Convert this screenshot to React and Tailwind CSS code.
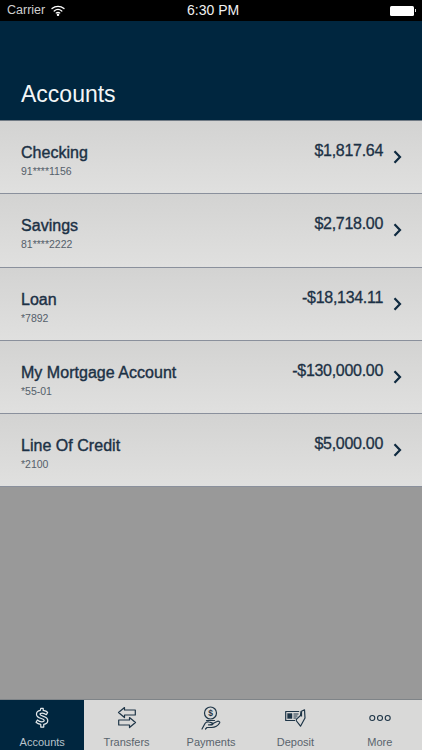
import React from "react";

const rows = [
  ["Checking", "91****1156", "$1,817.64"],
  ["Savings", "81****2222", "$2,718.00"],
  ["Loan", "*7892", "-$18,134.11"],
  ["My Mortgage Account", "*55-01", "-$130,000.00"],
  ["Line Of Credit", "*2100", "$5,000.00"],
];

const Dollar = () => (
  <svg width="14" height="24" viewBox="0 0 16 24" fill="none" stroke="#e3e8eb" strokeWidth="1.400" strokeLinejoin="round">
    <path d="M6.600 1h2.800v2.400c2 .3 4.200 1.200 5 2.200l-1.400 2.600c-1.200-1-3-1.900-4.800-1.900-1.600 0-2.500.6-2.500 1.500 0 1 1.200 1.400 3.300 2 3 .9 5.600 1.900 5.600 5 0 2.500-1.900 4-4.600 4.400v3.200H6.600v-3.100c-2.300-.3-4.200-1.300-5.400-2.500l1.500-2.500c1.400 1.200 3.200 2.100 5.100 2.100 1.700 0 2.700-.6 2.700-1.700 0-1.100-1.300-1.500-3.400-2.100-2.900-.8-5.400-1.800-5.400-4.800 0-2.500 1.800-4 4.400-4.400z" />
  </svg>
);

const Transfers = () => (
  <svg width="20" height="24" viewBox="0 0 20 24" fill="none" stroke="#1e3547" strokeWidth="1.200" strokeLinejoin="round">
    <path d="M7.500 1.500 1.500 6.500l6 5V9h10.800V4H7.500z" />
    <path d="M12.500 11.500l6 5-6 5V19H1.700v-5h10.800z" />
  </svg>
);

const Payments = () => (
  <svg width="20" height="24" viewBox="0 0 20 24" fill="none" stroke="#1e3547" strokeWidth="1.200" strokeLinecap="round" strokeLinejoin="round">
    <circle cx="9.500" cy="7" r="6" />
    <text x="9.500" y="10" textAnchor="middle" fontSize="8.500" fontFamily="Liberation Sans, sans-serif" fontWeight="700" fill="#1e3547" stroke="none">$</text>
    <path d="M1 23l3-5.500c1-1.500 2.500-2 4-1.500l3 .8c1.300.3 1.300 2 -.2 2H7.500" />
    <path d="M10 18.500l6-3c1.500-.8 3.200.3 2.700 1.300-1.500 2.700-4.700 4.700-8.200 4.700H6L4.500 23" />
    <path d="M5.500 14.500h8" />
  </svg>
);

const Deposit = () => (
  <svg width="21" height="18" viewBox="0 0 21 18" fill="none" stroke="#1e3547" strokeWidth="1.200" strokeLinejoin="round">
    <path d="M10 11.500H.7V2.500h13.500" />
    <path d="M2.500 4.500h4.500v5H2.500z" fill="#1e3547" strokeWidth="0.400" />
    <path d="M8.500 5h5M8.500 7h4M8.500 9h3" strokeWidth="1" />
    <path d="M16 2.500 19.500 .8 20 9l-4.500 8.200-4-5.200c-.5-.9 0-1.800.6-2.400L15.500 6.500z" />
    <path d="M16.500 2.500v5" />
  </svg>
);

const Dots = () => (
  <svg width="22" height="8" viewBox="0 0 22 8" fill="none" stroke="#1e3547" strokeWidth="1.100">
    <circle cx="3.300" cy="4" r="2.500" />
    <circle cx="11" cy="4" r="2.500" />
    <circle cx="18.700" cy="4" r="2.500" />
  </svg>
);

const tabs = [
  ["Accounts", <Dollar />],
  ["Transfers", <Transfers />],
  ["Payments", <Payments />],
  ["Deposit", <Deposit />],
  ["More", <Dots />],
];

export default function App() {
  return (
    <div className="w-[422px] h-[750px] flex flex-col overflow-hidden bg-[#999999] font-['Liberation_Sans',Arial,sans-serif]">
      <div className="h-[21px] bg-black text-white flex items-center justify-between relative pl-[7px] pr-[6px] shrink-0">
        <div className="flex items-center gap-[6px]">
          <span className="text-[12.500px] text-[#cfcfcf]">Carrier</span>
          <svg width="14" height="11" viewBox="0 0 14 11" fill="none" stroke="#ffffff" strokeWidth="1.300" strokeLinecap="round">
            <path d="M1 3.600C4.500.5 9.500.5 13 3.600" />
            <path d="M3.200 6C5.400 4.200 8.600 4.200 10.800 6" />
            <path d="M5.200 8C6.200 7.300 7.800 7.300 8.800 8" />
            <circle cx="7" cy="9.800" r="0.600" fill="#ffffff" />
          </svg>
        </div>
        <span className="absolute left-[187px] text-[14px] font-normal text-[#f0f0f0]">6:30 PM</span>
        <div className="flex items-center gap-[1px]">
          <div className="w-[24px] h-[10px] bg-white rounded-[1.500px]" />
          <div className="w-[1.500px] h-[3px] bg-[#dddddd]" />
        </div>
      </div>
      <div className="h-[99px] bg-[#00263f] shrink-0 flex items-end px-[21px] pb-[12px]">
        <h1 className="text-[23px] leading-[28px] font-normal text-[#f4f6f7]">Accounts</h1>
      </div>
      <div className="h-px bg-[#717b85] shrink-0" />
      <div className="shrink-0">
        {rows.map(([name, number, amount]) => (
          <div
            key={name}
            className="h-[73.300px] border-b border-[#8a909c] bg-gradient-to-b from-[#d3d3d2] to-[#e0e0df] flex items-start pl-[21px] pr-[20px] pt-[22px]"
          >
            <div className="flex-1">
              <div className="text-[16px] leading-[20px] tracking-[0.030px] [-webkit-text-stroke:0.400px_#1c3145] text-[#1c3145]">{name}</div>
              <div className="text-[10.500px] leading-[14px] mt-[1px] text-[#55606a]">{number}</div>
            </div>
            <div className="text-[16px] leading-[20px] tracking-[-0.300px] -mt-[2px] [-webkit-text-stroke:0.300px_#1c3145] text-[#1c3145]">{amount}</div>
            <svg className="ml-[10px] mt-[7px]" width="9" height="14" viewBox="0 0 9 14" fill="none" stroke="#0f2a40" strokeWidth="2.200">
              <path d="M1.500 1.200 7 7l-5.500 5.800" />
            </svg>
          </div>
        ))}
      </div>
      <div className="flex-1 bg-[#999999]" />
      <div className="h-[51px] shrink-0 border-t border-[#7f8488] bg-[#d9d9d8] flex">
        {tabs.map(([label, icon], i) => (
          <div
            key={label}
            className={`flex-1 flex flex-col items-center ${i === 0 ? "bg-[#00263f] text-[#b9c3cb]" : "text-[#59646d]"}`}
          >
            <div className="h-[37px] flex items-center justify-center">{icon}</div>
            <div className="text-[11px] leading-[15px]">{label}</div>
          </div>
        ))}
      </div>
    </div>
  );
}
